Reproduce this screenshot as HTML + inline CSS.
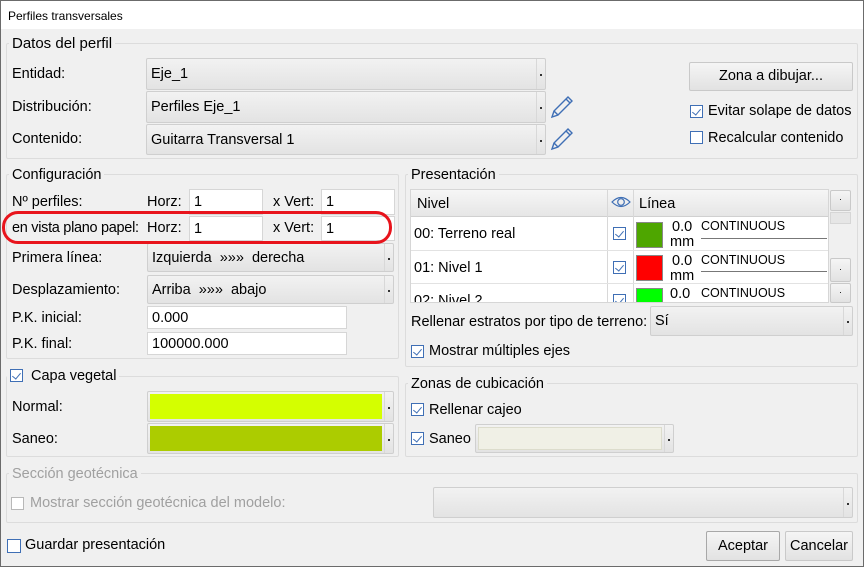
<!DOCTYPE html>
<html><head><meta charset="utf-8"><style>
*{box-sizing:border-box;margin:0;padding:0}
body{width:864px;height:567px;background:#f0f0f0;font-family:"Liberation Sans",sans-serif;font-size:14.5px;color:#000;position:relative;overflow:hidden}
.a{position:absolute}
.t{position:absolute;white-space:nowrap;line-height:16px}
.g{position:absolute;border:1px solid #dcdcdc;border-radius:2px}
.gt{position:absolute;background:#f0f0f0;padding:0 3px;white-space:nowrap;line-height:16px}
.cb{position:absolute;background:linear-gradient(#f2f2f2,#e3e3e3);border:1px solid #cfcfcf;border-radius:2px}
.cb span{position:absolute;left:4px;top:50%;transform:translateY(-50%);white-space:nowrap}
.cb i{position:absolute;right:0;top:0;bottom:0;width:9px;border-left:1px solid #d8d8d8}
.cb i:after{content:"";position:absolute;left:3px;top:50%;width:2px;height:2px;background:#333}
.in{position:absolute;background:#fff;border:1px solid #d6d6d6}
.in span{position:absolute;left:4px;top:50%;transform:translateY(-50%)}
.ck{position:absolute;width:13px;height:13px;border:1px solid #3f6fb5;background:#fff}
.ck.on:after{content:"";position:absolute;left:3px;top:1px;width:4px;height:7px;border:solid #3f6fb5;border-width:0 1.5px 1.5px 0;transform:rotate(40deg)}
.btn{position:absolute;background:linear-gradient(#f5f5f5,#e2e2e2);border:1px solid #c9c9c9;border-radius:2px;text-align:center}
.dis{color:#a0a0a0}
</style></head><body>
<div class="a" style="left:0;top:0;width:864px;height:567px;border:1px solid #6b6b6b;z-index:5;pointer-events:none"></div>
<div class="a" style="left:0;top:0;width:864px;height:29px;background:#fff"></div>
<div class="t" style="left:8px;top:8px;font-size:12px">Perfiles transversales</div>

<div class="g" style="left:6px;top:43px;width:852px;height:116px"></div>
<div class="gt" style="left:9px;top:36px;font-size:15px">Datos del perfil</div>
<div class="t" style="left:12px;top:66px">Entidad:</div>
<div class="t" style="left:12px;top:99px">Distribución:</div>
<div class="t" style="left:12px;top:131px">Contenido:</div>
<div class="cb" style="left:146px;top:58px;width:400px;height:32px"><span>Eje_1</span><i></i></div>
<div class="cb" style="left:146px;top:91px;width:400px;height:32px"><span>Perfiles Eje_1</span><i></i></div>
<div class="cb" style="left:146px;top:124px;width:400px;height:31px"><span>Guitarra Transversal 1</span><i></i></div>
<svg class="a" style="left:549px;top:94px" width="26" height="26" viewBox="0 0 26 26"><path d="M3 23 L5 17 L19 3 L23 7 L9 21 Z M5 17 L9 21 M17 5 L21 9" fill="none" stroke="#3f6fb5" stroke-width="1.4"/></svg>
<svg class="a" style="left:549px;top:126px" width="26" height="26" viewBox="0 0 26 26"><path d="M3 23 L5 17 L19 3 L23 7 L9 21 Z M5 17 L9 21 M17 5 L21 9" fill="none" stroke="#3f6fb5" stroke-width="1.4"/></svg>
<div class="btn" style="left:689px;top:62px;width:164px;height:29px;line-height:27px">Zona a dibujar...</div>
<div class="ck on" style="left:690px;top:105px"></div><div class="t" style="left:708px;top:103px">Evitar solape de datos</div>
<div class="ck" style="left:690px;top:131px"></div><div class="t" style="left:708px;top:130px">Recalcular contenido</div>

<div class="g" style="left:6px;top:174px;width:393px;height:185px"></div>
<div class="gt" style="left:9px;top:167px">Configuración</div>
<div class="t" style="left:12px;top:194px">Nº perfiles:</div>
<div class="t" style="left:147px;top:194px">Horz:</div>
<div class="in" style="left:189px;top:189px;width:74px;height:26px"><span>1</span></div>
<div class="t" style="left:273px;top:194px">x Vert:</div>
<div class="in" style="left:321px;top:189px;width:74px;height:26px"><span>1</span></div>
<div class="t" style="left:12px;top:220px;letter-spacing:-0.3px">en vista plano papel:</div>
<div class="t" style="left:147px;top:220px">Horz:</div>
<div class="in" style="left:189px;top:216px;width:74px;height:25px"><span>1</span></div>
<div class="t" style="left:273px;top:220px">x Vert:</div>
<div class="in" style="left:321px;top:216px;width:74px;height:25px"><span>1</span></div>
<div class="a" style="left:2px;top:211px;width:390px;height:33px;border:3px solid #e8141c;border-radius:16px;z-index:3"></div>
<div class="t" style="left:12px;top:250px">Primera línea:</div>
<div class="cb" style="left:147px;top:243px;width:247px;height:29px"><span>Izquierda &nbsp;»»» &nbsp;derecha</span><i></i></div>
<div class="t" style="left:12px;top:282px">Desplazamiento:</div>
<div class="cb" style="left:147px;top:275px;width:247px;height:29px"><span>Arriba &nbsp;»»» &nbsp;abajo</span><i></i></div>
<div class="t" style="left:12px;top:310px">P.K. inicial:</div>
<div class="in" style="left:147px;top:306px;width:200px;height:23px"><span>0.000</span></div>
<div class="t" style="left:12px;top:336px">P.K. final:</div>
<div class="in" style="left:147px;top:332px;width:200px;height:23px"><span>100000.000</span></div>

<div class="g" style="left:6px;top:376px;width:393px;height:81px"></div>
<div class="gt" style="left:7px;top:368px;padding-left:24px">Capa vegetal</div>
<div class="ck on" style="left:10px;top:369px"></div>
<div class="t" style="left:12px;top:399px">Normal:</div>
<div class="t" style="left:12px;top:431px">Saneo:</div>
<div class="cb" style="left:147px;top:391px;width:247px;height:31px"><div class="a" style="left:2px;top:2px;right:11px;bottom:2px;background:#d4ff00"></div><i></i></div>
<div class="cb" style="left:147px;top:423px;width:247px;height:31px"><div class="a" style="left:2px;top:2px;right:11px;bottom:2px;background:#accc00"></div><i></i></div>

<div class="g" style="left:405px;top:174px;width:453px;height:193px"></div>
<div class="gt" style="left:408px;top:167px">Presentación</div>
<div class="a" style="left:410px;top:189px;width:419px;height:114px;background:#fff;border:1px solid #d6d6d6;overflow:hidden">
 <div class="a" style="left:0;top:0;width:419px;height:27px;background:linear-gradient(#f6f6f6,#e6e6e6);border-bottom:1px solid #d0d0d0"></div>
 <div class="a" style="left:196px;top:0;width:1px;height:114px;background:#d8d8d8"></div>
 <div class="a" style="left:222px;top:0;width:1px;height:114px;background:#d8d8d8"></div>
 <div class="t" style="left:6px;top:6px">Nivel</div>
 <svg class="a" style="left:200px;top:5px" width="20" height="14" viewBox="0 0 20 14"><path d="M1 7 Q10 -2 19 7 Q10 16 1 7 Z" fill="none" stroke="#3f6fb5" stroke-width="1.2"/><circle cx="10" cy="7" r="3.3" fill="none" stroke="#3f6fb5" stroke-width="1.2"/></svg>
 <div class="t" style="left:228px;top:6px">Línea</div>
 <div class="a" style="left:0;top:60px;width:419px;height:1px;background:#e2e2e2"></div>
 <div class="a" style="left:0;top:93px;width:419px;height:1px;background:#e2e2e2"></div>
 <div class="t" style="left:3px;top:36px">00: Terreno real</div>
 <div class="t" style="left:3px;top:70px">01: Nivel 1</div>
 <div class="t" style="left:3px;top:103px">02: Nivel 2</div>
 <div class="ck on" style="left:202px;top:37px"></div>
 <div class="ck on" style="left:202px;top:71px"></div>
 <div class="ck on" style="left:202px;top:104px"></div>
 <div class="a" style="left:225px;top:32px;width:27px;height:26px;background:#4ea600;border:1px solid #888"></div>
 <div class="a" style="left:225px;top:65px;width:27px;height:26px;background:#ff0000;border:1px solid #888"></div>
 <div class="a" style="left:225px;top:98px;width:27px;height:26px;background:#00ff00;border:1px solid #888"></div>
 <div class="t" style="left:259px;top:30px;line-height:15px;text-align:center">0.0<br>mm</div>
 <div class="t" style="left:259px;top:64px;line-height:15px;text-align:center">0.0<br>mm</div>
 <div class="t" style="left:259px;top:97px;line-height:15px">0.0</div>
 <div class="t" style="left:290px;top:28px;font-size:12.5px">CONTINUOUS</div>
 <div class="t" style="left:290px;top:62px;font-size:12.5px">CONTINUOUS</div>
 <div class="t" style="left:290px;top:95px;font-size:12.5px">CONTINUOUS</div>
 <div class="a" style="left:290px;top:48px;width:126px;height:1px;background:#777"></div>
 <div class="a" style="left:290px;top:81px;width:126px;height:1px;background:#777"></div>
</div>
<div class="a" style="left:829px;top:189px;width:23px;height:114px;background:#f0f0f0"></div>
<div class="btn" style="left:830px;top:190px;width:21px;height:21px;font-size:9px;line-height:16px">·</div>
<div class="a" style="left:830px;top:212px;width:21px;height:12px;background:#e6e6e6;border:1px solid #d6d6d6"></div>
<div class="btn" style="left:830px;top:258px;width:21px;height:24px;font-size:9px;line-height:20px">·</div>
<div class="btn" style="left:830px;top:283px;width:21px;height:20px;font-size:9px;line-height:16px">·</div>
<div class="t" style="left:411px;top:314px">Rellenar estratos por tipo de terreno:</div>
<div class="cb" style="left:650px;top:306px;width:203px;height:30px"><span>Sí</span><i></i></div>
<div class="ck on" style="left:411px;top:345px"></div><div class="t" style="left:429px;top:343px">Mostrar múltiples ejes</div>

<div class="g" style="left:405px;top:383px;width:453px;height:74px"></div>
<div class="gt" style="left:408px;top:376px">Zonas de cubicación</div>
<div class="ck on" style="left:411px;top:403px"></div><div class="t" style="left:429px;top:402px">Rellenar cajeo</div>
<div class="ck on" style="left:411px;top:432px"></div><div class="t" style="left:429px;top:431px">Saneo</div>
<div class="cb" style="left:475px;top:424px;width:199px;height:29px"><div class="a" style="left:2px;top:2px;right:11px;bottom:2px;background:#f0f0e6;border:1px solid #dcdccc"></div><i></i></div>

<div class="g" style="left:6px;top:473px;width:852px;height:50px"></div>
<div class="gt dis" style="left:9px;top:466px">Sección geotécnica</div>
<div class="ck" style="left:11px;top:497px;border-color:#b8b8b8"></div><div class="t dis" style="left:30px;top:495px">Mostrar sección geotécnica del modelo:</div>
<div class="cb" style="left:433px;top:487px;width:420px;height:31px"><i></i></div>

<div class="ck" style="left:7px;top:539px;width:14px;height:14px"></div><div class="t" style="left:25px;top:537px">Guardar presentación</div>
<div class="btn" style="left:706px;top:531px;width:74px;height:30px;line-height:28px;border-color:#a8a8a8">Aceptar</div>
<div class="btn" style="left:785px;top:531px;width:68px;height:30px;line-height:28px">Cancelar</div>
</body></html>
